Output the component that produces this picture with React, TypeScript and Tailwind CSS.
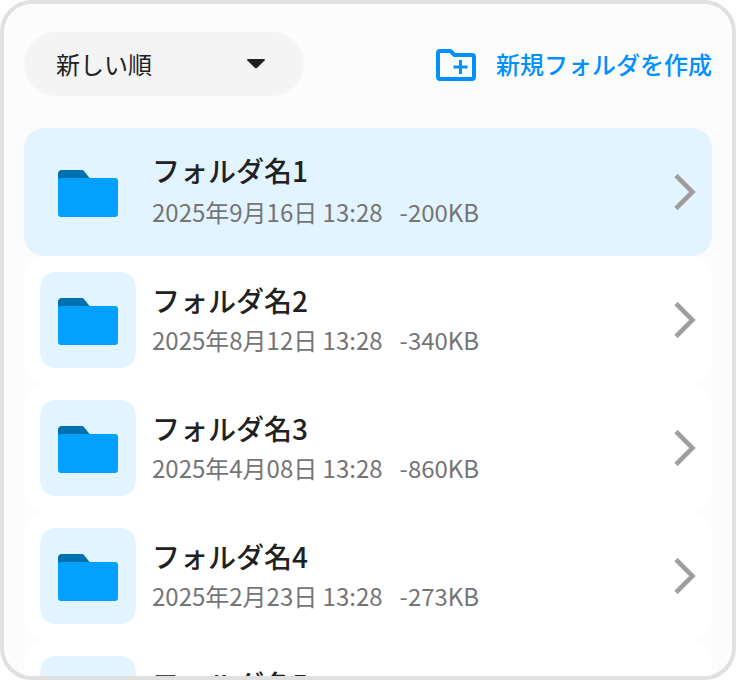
type Folder = { name: string; date: string; size: string; selected?: boolean };

const folders: Folder[] = [
  { name: "フォルダ名1", date: "2025年9月16日 13:28", size: "-200KB", selected: true },
  { name: "フォルダ名2", date: "2025年8月12日 13:28", size: "-340KB" },
  { name: "フォルダ名3", date: "2025年4月08日 13:28", size: "-860KB" },
  { name: "フォルダ名4", date: "2025年2月23日 13:28", size: "-273KB" },
  { name: "フォルダ名5", date: "2025年1月10日 13:28", size: "-310KB" },
];

function FolderIcon() {
  return (
    <svg width="60" height="52" viewBox="0 -4 60 52" aria-hidden="true">
      <path d="M0 12V3.5C0 1.6 1.6 0 3.5 0H23.5C24.6 0 25.5 .4 26.2 1.3L32 8.5V12Z" fill="#0070b0" />
      <rect y="8" width="60" height="39" rx="3" fill="#00a1ff" />
    </svg>
  );
}

function NewFolderIcon() {
  return (
    <svg width="40" height="34" viewBox="0 -2 40 34" fill="none" stroke="#0090ff" aria-hidden="true">
      <path
        d="M4 2H14.5L18.5 6H36Q38 6 38 8V28Q38 30 36 30H4Q2 30 2 28V4Q2 2 4 2Z"
        strokeWidth="4"
        strokeLinejoin="round"
      />
      <path d="M24.5 11V25M17.5 18H31.5" strokeWidth="3" />
    </svg>
  );
}

function Chevron() {
  return (
    <svg className="shrink-0" width="22" height="36" viewBox="0 0 22 36" fill="none" aria-hidden="true">
      <path d="M2 1.5L18.5 18L2 34.5" stroke="#9e9e9e" strokeWidth="4.6" />
    </svg>
  );
}

function FolderRow({ folder }: { folder: Folder }) {
  return (
    <li>
      <button
        type="button"
        className={`flex h-32 w-full items-center gap-4 rounded-[20px] px-4 text-left ${
          folder.selected ? "bg-[#e2f4ff]" : "bg-white"
        }`}
      >
        <span className="flex size-24 shrink-0 items-center justify-center rounded-2xl bg-[#e2f4ff]">
          <FolderIcon />
        </span>
        <span className={`flex min-w-0 flex-1 flex-col ${folder.selected ? "gap-0.5 pb-0.5" : ""}`}>
          <span className="text-[28px] leading-10 font-medium text-[#212121]">{folder.name}</span>
          <span className="flex gap-[17px] text-2xl leading-10 text-[#757575]">
            <span>{folder.date}</span>
            <span>{folder.size}</span>
          </span>
        </span>
        <Chevron />
      </button>
    </li>
  );
}

export default function App() {
  return (
    <main className="flex h-screen flex-col overflow-hidden rounded-[32px] border-4 border-[#e0e0e0] bg-[#fcfcfc] px-5 pt-7 font-['Noto_Sans_CJK_JP',sans-serif]">
      <header className="flex shrink-0 items-center justify-between pb-8">
        <div className="relative w-[280px]">
          <select
            aria-label="並び順"
            className="h-16 w-full appearance-none rounded-full bg-[#f4f4f4] px-8 text-2xl text-[#212121]"
          >
            <option>新しい順</option>
            <option>古い順</option>
          </select>
          <svg
            className="pointer-events-none absolute top-[27px] right-[39px]"
            width="18"
            height="10"
            viewBox="0 0 18 10"
            aria-hidden="true"
          >
            <path d="M.8 0H17.2Q18.4 .5 17.6 1.5L10.2 8.8Q9 9.8 7.8 8.8L.4 1.5Q-.4 .5 .8 0Z" fill="#212121" />
          </svg>
        </div>
        <button type="button" className="flex items-center gap-5 text-2xl font-medium text-[#0090ff]">
          <NewFolderIcon />
          新規フォルダを作成
        </button>
      </header>
      <ul className="min-h-0 flex-1 overflow-hidden">
        {folders.map((folder) => (
          <FolderRow key={folder.name} folder={folder} />
        ))}
      </ul>
    </main>
  );
}
